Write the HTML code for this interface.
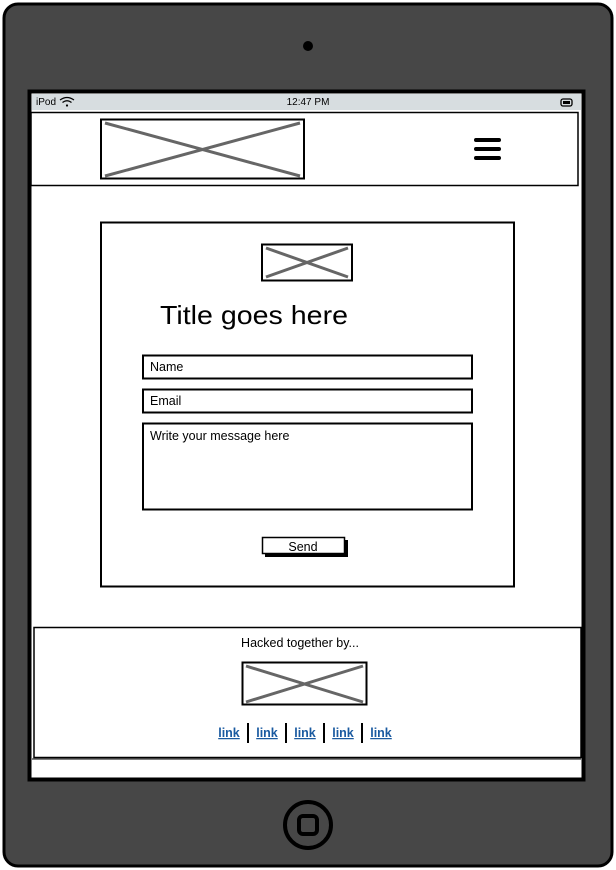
<!DOCTYPE html>
<html><head><meta charset="utf-8"><style>
html,body{margin:0;padding:0;background:#fff;width:616px;height:870px;overflow:hidden}
svg{display:block}
text{font-family:"Liberation Sans",sans-serif;fill:#000}
</style></head><body>
<svg width="616" height="870" viewBox="0 0 616 870" xmlns="http://www.w3.org/2000/svg">
<rect x="4" y="4" width="608" height="862" rx="14" fill="#474747" stroke="#000" stroke-width="3"/>
<circle cx="308" cy="46" r="5" fill="#000"/>
<rect x="29.5" y="91.5" width="554" height="688" fill="#fff" stroke="#000" stroke-width="4"/>
<rect x="32" y="94" width="549" height="16" fill="#d7dde0"/>
<text x="36" y="105" font-size="10">iPod</text>
<path d="M60 100 q7 -5 14 0 M62.5 102.5 q4.5 -3.5 9 0" stroke="#000" stroke-width="1.2" fill="none"/>
<circle cx="67" cy="105.5" r="1.1" fill="#000"/>
<text x="308" y="105" font-size="10" text-anchor="middle">12:47 PM</text>
<rect x="561" y="99" width="11" height="7" rx="2" fill="none" stroke="#000" stroke-width="1.3"/>
<rect x="563" y="101" width="7" height="3" fill="#000"/>
<rect x="31" y="112.5" width="547" height="73" fill="#fff" stroke="#000" stroke-width="1.5"/>
<rect x="101" y="119.5" width="203" height="59" fill="#fff" stroke="#000" stroke-width="2"/>
<path d="M105 123 L300 176 M105 176 L300 123" stroke="#666" stroke-width="3"/>
<path d="M476 140 h23 M476 149 h23 M476 158 h23" stroke="#000" stroke-width="4" stroke-linecap="round"/>
<rect x="101" y="222.5" width="413" height="364" fill="#fff" stroke="#000" stroke-width="2"/>
<rect x="262" y="244.5" width="90" height="36" fill="#fff" stroke="#000" stroke-width="2"/>
<path d="M266 248 L348 277 M266 277 L348 248" stroke="#666" stroke-width="3"/>
<text x="160" y="324" font-size="26" textLength="188" lengthAdjust="spacingAndGlyphs">Title goes here</text>
<rect x="143" y="355.5" width="329" height="23" fill="#fff" stroke="#000" stroke-width="2"/>
<text x="150" y="371" font-size="12.5">Name</text>
<rect x="143" y="389.5" width="329" height="23" fill="#fff" stroke="#000" stroke-width="2"/>
<text x="150" y="405" font-size="12.5">Email</text>
<rect x="143" y="423.5" width="329" height="86" fill="#fff" stroke="#000" stroke-width="2"/>
<text x="150" y="440" font-size="12.5">Write your message here</text>
<rect x="265" y="540" width="83" height="17" fill="#000"/>
<rect x="262.5" y="537.5" width="82" height="16" fill="#fff" stroke="#000" stroke-width="1.5"/>
<text x="303" y="551" font-size="12.5" text-anchor="middle">Send</text>
<rect x="34" y="627.5" width="547" height="130" fill="#fff" stroke="#000" stroke-width="1.5"/>
<text x="300" y="647" font-size="12.5" text-anchor="middle">Hacked together by...</text>
<rect x="242.5" y="662.5" width="124" height="42" fill="#fff" stroke="#000" stroke-width="2"/>
<path d="M246 666 L363 702 M246 702 L363 666" stroke="#666" stroke-width="3"/>
<g font-size="12.5" text-anchor="middle" font-weight="bold">
<text x="229" y="737" style="fill:#1a5aa0;text-decoration:underline">link</text>
<text x="267" y="737" style="fill:#1a5aa0;text-decoration:underline">link</text>
<text x="305" y="737" style="fill:#1a5aa0;text-decoration:underline">link</text>
<text x="343" y="737" style="fill:#1a5aa0;text-decoration:underline">link</text>
<text x="381" y="737" style="fill:#1a5aa0;text-decoration:underline">link</text>
</g>
<path d="M248 723 v20 M286 723 v20 M324 723 v20 M362 723 v20" stroke="#000" stroke-width="2"/>
<path d="M32 759 h549" stroke="#000" stroke-width="1"/>
<circle cx="308" cy="825" r="23" fill="none" stroke="#000" stroke-width="4"/>
<rect x="299" y="816" width="18" height="18" rx="4" fill="none" stroke="#000" stroke-width="4"/>
</svg>
</body></html>
